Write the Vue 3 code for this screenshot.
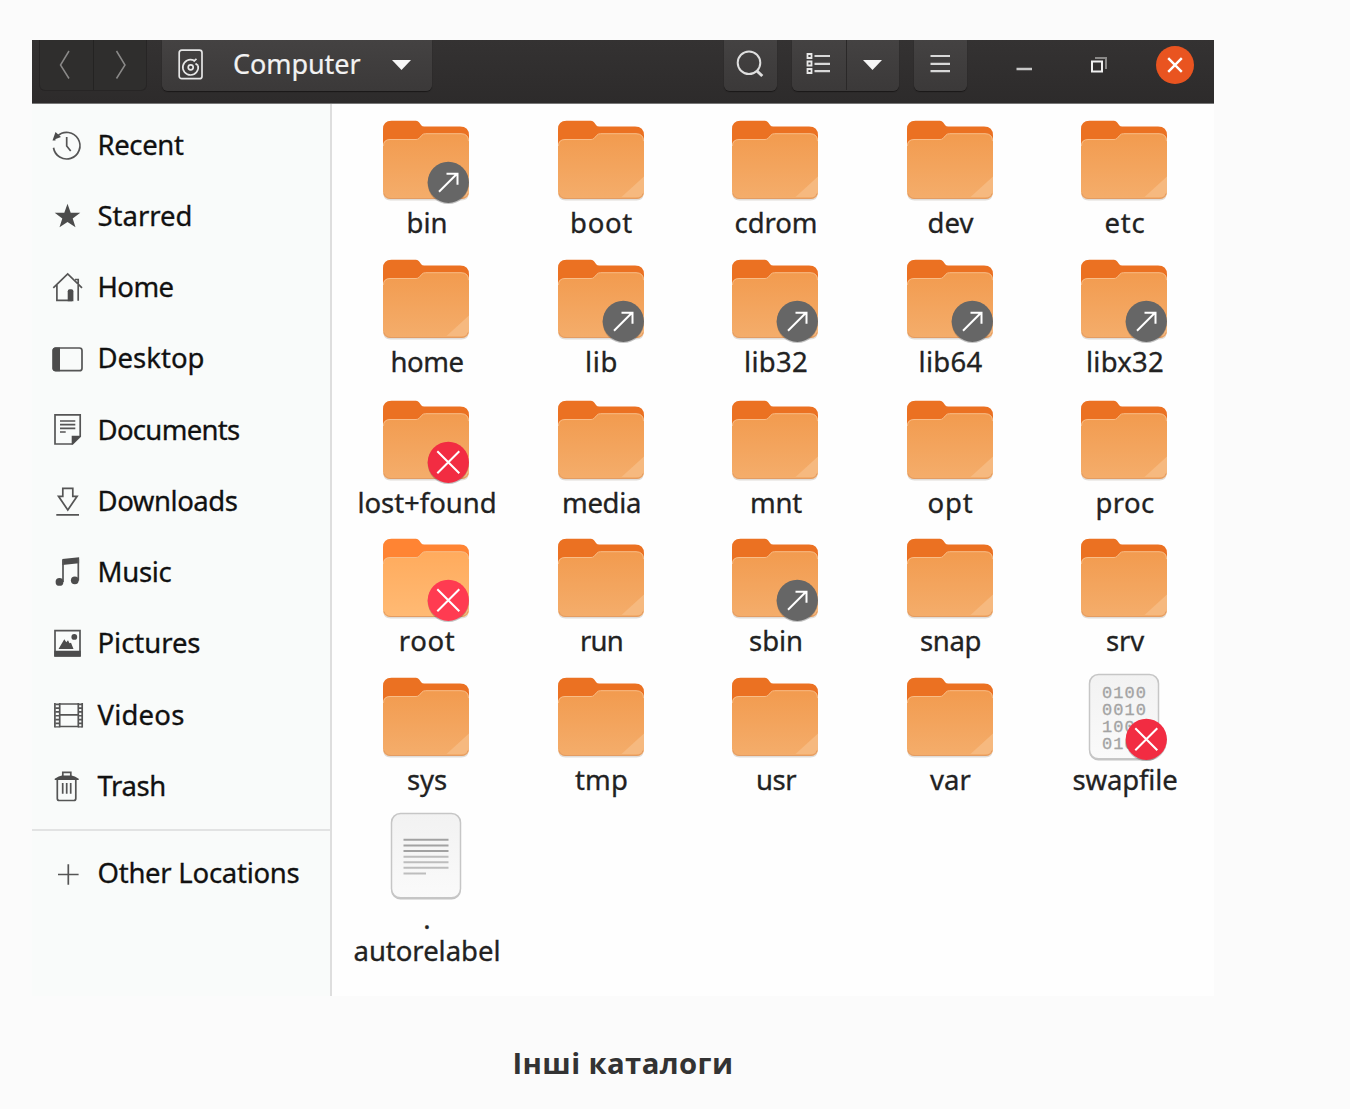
<script setup>
const places = [
  { name: 'Recent', width: 86 },
  { name: 'Starred', width: 95 },
  { name: 'Home', width: 76 },
  { name: 'Desktop', width: 107 },
  { name: 'Documents', width: 142 },
  { name: 'Downloads', width: 140 },
  { name: 'Music', width: 74 },
  { name: 'Pictures', width: 103 },
  { name: 'Videos', width: 87 },
  { name: 'Trash', width: 68.5 },
]

const entries = [
  { name: 'bin', width: 41, emblem: 'link' },
  { name: 'boot', width: 63 },
  { name: 'cdrom', width: 83 },
  { name: 'dev', width: 46 },
  { name: 'etc', width: 41 },
  { name: 'home', width: 73 },
  { name: 'lib', width: 33, emblem: 'link' },
  { name: 'lib32', width: 64, emblem: 'link' },
  { name: 'lib64', width: 64, emblem: 'link' },
  { name: 'libx32', width: 78, emblem: 'link' },
  { name: 'lost+found', width: 139, emblem: 'denied' },
  { name: 'media', width: 79 },
  { name: 'mnt', width: 52 },
  { name: 'opt', width: 46 },
  { name: 'proc', width: 59 },
  { name: 'root', width: 56.5, emblem: 'denied', active: true },
  { name: 'run', width: 43 },
  { name: 'sbin', width: 54, emblem: 'link' },
  { name: 'snap', width: 61 },
  { name: 'srv', width: 38 },
  { name: 'sys', width: 40 },
  { name: 'tmp', width: 53 },
  { name: 'usr', width: 40 },
  { name: 'var', width: 41 },
  { name: 'swapfile', width: 105, kind: 'binary', emblem: 'denied' },
  { name: 'autorelabel', prefix: '.', width: 147, kind: 'text' },
]

const bits = ['0100', '0010', '1000', '0100']

// Tracks a label out or in so that it takes the given width.
const vFit = {
  mounted(el, { value }) {
    const count = el.textContent.length
    const spacing = (value - el.getBoundingClientRect().width) / count
    el.style.letterSpacing = `${spacing.toFixed(3)}px`
  },
}
</script>

<template>
  <main class="page">
    <section class="window">
      <header class="titlebar">
        <div class="nav">
          <button class="nav-btn" aria-label="Back">
            <svg width="54" height="51" viewBox="0 0 54 51"><path d="M30 11 21.500 25 30 38.500" /></svg>
          </button>
          <button class="nav-btn" aria-label="Forward">
            <svg width="54" height="51" viewBox="0 0 54 51"><path d="M23.500 11 32 25 23.500 38.500" /></svg>
          </button>
        </div>

        <button class="btn path">
          <svg class="disk" width="26" height="32" viewBox="0 0 26 32">
            <rect x="1.200" y="1.200" width="22.800" height="28.500" rx="2.500" />
            <path d="M15.700 11.300A7.700 7.700 0 1 0 20 16.500M15.500 12.500 18.500 9.800" />
            <path d="M20 16.500 17.500 14.500" />
            <circle cx="12.700" cy="18.300" r="2.500" />
          </svg>
          <span v-fit="127.5" class="path-name">Computer</span>
          <svg class="caret" width="20" height="12" viewBox="0 0 20 12"><path d="M0 1H19L9.500 11Z" /></svg>
        </button>

        <button class="btn search" aria-label="Search">
          <svg width="53" height="51" viewBox="0 0 53 51">
            <circle cx="25" cy="22.700" r="11.300" />
            <path d="m32.500 30.500 2.500 2.500" />
            <path class="handle" d="m33 31 5.300 5" />
          </svg>
        </button>

        <div class="btn view">
          <button class="half" aria-label="List view">
            <svg width="53" height="51" viewBox="0 0 53 51">
              <path class="boxes" d="M15.500 14h4v4h-4ZM15.500 21.500h4v4h-4ZM15.500 29h4v4h-4Z" />
              <path d="M22.500 16H38M22.500 23.800H38M22.500 31.200H38" />
            </svg>
          </button>
          <button class="half" aria-label="View options">
            <svg class="caret" width="20" height="12" viewBox="0 0 20 12"><path d="M0 1H19L9.500 11Z" /></svg>
          </button>
        </div>

        <button class="btn menu" aria-label="Menu">
          <svg width="53" height="51" viewBox="0 0 53 51"><path d="M16.500 16h19.500M16.500 23.800h19.500M16.500 31.200h19.500" /></svg>
        </button>

        <div class="controls">
          <svg class="minimize" width="16" height="18" viewBox="0 0 16 18"><path class="line" d="M.5 13h15.500" /></svg>
          <svg class="restore" width="18" height="18" viewBox="0 0 18 18">
            <path class="ghost" d="M5 2H16V13" />
            <rect class="front" x="2" y="5.500" width="10" height="10" />
          </svg>
          <button class="close" aria-label="Close">
            <svg width="18" height="18" viewBox="0 0 18 18"><path d="m2.200 2.200 13.600 13.600M15.800 2.200 2.200 15.800" /></svg>
          </button>
        </div>
      </header>

      <div class="body">
        <nav class="sidebar">
          <ul class="places">
            <li v-for="place in places" :key="place.name" class="place">
              <svg class="glyph" viewBox="0 0 32 32">
                <template v-if="place.name === 'Recent'">
                  <path d="M6.500 8A13.300 13.300 0 1 1 2.400 18.800" stroke-dasharray="70 1.500" />
                  <path d="M15.700 9v9l4 5" />
                  <path class="solid" d="M4.500 4v8.500h-3Zm0 0 5.500 5-8 3Z" />
                </template>
                <path v-else-if="place.name === 'Starred'" class="solid" d="m16.500 4.800 3.200 9h9.600l-7.600 5.600 2.800 8.900-8-5.400-8 5.400 2.800-8.900-7.600-5.600h9.600Z" />
                <template v-else-if="place.name === 'Home'">
                  <path d="M2.300 16.800 16.700 3 31 16.800M5.900 14v15.400H21M27.200 14v15.700M24 8.500h3.200v4" />
                  <path class="solid" d="M16.700 20.300q0-2 2-2h1.700q2 0 2 2v9.900h-5.700Z" />
                </template>
                <template v-else-if="place.name === 'Desktop'">
                  <rect x="2.200" y="6" width="28.800" height="22.700" rx="2.500" />
                  <path class="solid" d="M4.500 5.500H9v23.700H4.500q-3 0-3-3V8.500q0-3 3-3Z" />
                </template>
                <template v-else-if="place.name === 'Documents'">
                  <path d="M4 1.800h25.200v21.500l-7.700 7.700H4Z" />
                  <path class="solid" d="M20.700 22.700h9L21.500 31.500h-.8Z" />
                  <path d="M9 8h15.300M9 11.700h15.300M9 15.400h15.300M9 19h5.700" />
                </template>
                <path v-else-if="place.name === 'Downloads'" d="M11.800 4.300h10v8h4.300L16.800 26 7.500 12.300h4.300ZM5.300 30.800H28" />
                <template v-else-if="place.name === 'Music'">
                  <path class="solid" d="m11.300 3 16.800-1.800v6L11.300 9Z" />
                  <path d="M12 4v22M27.300 3v21.500" />
                  <circle class="solid" cx="8.500" cy="25.900" r="3.900" />
                  <circle class="solid" cx="23.800" cy="24.300" r="3.900" />
                </template>
                <template v-else-if="place.name === 'Pictures'">
                  <path d="M4 3.600h25v25H4Z" />
                  <path class="solid" d="M3.300 23.700h26.400v6H3.300ZM7.500 22 13.300 12.200l2 3 1.700-2 1.500 3 1.500-.5L22.500 22Z" />
                  <circle class="solid" cx="23.300" cy="9.900" r="2.900" />
                </template>
                <template v-else-if="place.name === 'Videos'">
                  <path d="M3.900 4.900v24.700M8.700 4.900v24.700M27.300 4.900v24.700M31.200 4.900v24.700M8 6h20M8 16.900h20M8 28.500h20" />
                  <path d="M6.300 5.500v24M29.300 5.500v24" stroke-width="4" stroke-dasharray="1.700 2.100" />
                </template>
                <template v-else>
                  <path d="M11.800 6V2.400h8V6" />
                  <path class="solid" d="M3.700 9.900V8.700Q8 6 11 5.500h9.500q3 .5 7.200 3.200v1.200Z" />
                  <path d="M6.300 9.500v19q0 2 2 2h14.500q2 0 2-2v-19M11.700 13v10.700M15.700 13v10.700M19.700 13v10.700" />
                </template>
              </svg>
              <span v-fit="place.width">{{ place.name }}</span>
            </li>
          </ul>
          <div class="place other">
            <svg class="glyph" viewBox="0 0 32 32"><path d="M7 17.500h20.600M17.300 7.200v20.600" /></svg>
            <span v-fit="202">Other Locations</span>
          </div>
        </nav>

        <div class="grid">
          <svg class="defs" width="0" height="0" aria-hidden="true">
            <defs>
              <linearGradient id="front" x1="0" y1="0" x2="0" y2="1">
                <stop offset="0" stop-color="#f29b4f" /><stop offset="1" stop-color="#f4ad6b" />
              </linearGradient>
              <linearGradient id="frontActive" x1="0" y1="0" x2="0" y2="1">
                <stop offset="0" stop-color="#ffab5d" /><stop offset="1" stop-color="#ffba74" />
              </linearGradient>
              <linearGradient id="paper" x1="0" y1="0" x2="0" y2="1">
                <stop offset="0" stop-color="#f2f2f2" /><stop offset="1" stop-color="#fafafa" />
              </linearGradient>
            </defs>
          </svg>

          <figure v-for="entry in entries" :key="entry.name" class="entry">
            <svg class="icon" viewBox="0 0 94 94">
              <g v-if="!entry.kind">
                <path class="shade" d="M4.500 78h85v2.500q0 7-7 7h-71q-7 0-7-7Z" />
                <path :class="['back', { active: entry.active }]" d="M4 16.300q0-8.500 8.500-8.500H37q2 0 3.200 1.800l2 2.700q1 1.300 3 1.300H81q9 0 9 9V50H4Z" />
                <path :fill="entry.active ? 'url(#frontActive)' : 'url(#front)'" d="M4 33q0-6.500 6.500-6.500H37q2 0 3.200-1.200l2.600-3q1.300-1.600 3.700-1.600H82q8 0 8 8V78.500q0 7.500-7.500 7.500h-71Q4 86 4 78.500Z" />
                <path class="shine" d="M4.500 33q0-6.500 6.500-6.500H37q2 0 3.200-1.200l2.600-3q1.300-1.600 3.700-1.600H82q7.500 0 7.500 7.500" />
                <path class="corner" d="M67.500 84 90 63.500V78q0 6-6 6Z" />
                <path class="rim" d="M5 80.500q1.500 5 7 5h70q5.500 0 7-5" />
              </g>
              <g v-else>
                <rect class="paper-shade" x="12" y="5" width="70" height="85.500" rx="9.500" />
                <rect class="paper" x="12.500" y="4.500" width="69" height="84.300" rx="9" />
                <g v-if="entry.kind === 'binary'" class="bits">
                  <text v-for="(row, i) in bits" :key="i" x="25" :y="28 + i * 17" textLength="44">{{ row }}</text>
                </g>
                <g v-else class="lines">
                  <path class="dark" d="M24.500 30.700h45M24.500 36.400h45M24.500 41.900h45" />
                  <path d="M24.500 47.700h45M24.500 53.200h45M24.500 58.800h45M24.500 64.400h22.500" />
                </g>
              </g>
              <g v-if="entry.emblem" :class="['emblem', entry.emblem, { active: entry.active }]">
                <circle class="emblem-shade" cx="69.300" cy="70.300" r="20.700" />
                <circle class="disc" cx="69.300" cy="69.300" r="20.600" />
                <path v-if="entry.emblem === 'link'" d="m60 78.700 18-18M67.500 60.700h11v11" />
                <path v-else d="m58.300 58.300 22 22M80.300 58.300l-22 22" />
              </g>
            </svg>
            <figcaption class="label">
              <span v-fit="entry.width"><template v-if="entry.prefix">{{ entry.prefix }}<br></template>{{ entry.name }}</span>
            </figcaption>
          </figure>
        </div>
      </div>
    </section>

    <p class="caption"><span v-fit="221">Інші каталоги</span></p>
  </main>
</template>

<style>
body {
  margin: 0;
  background: #fbfbfb;
}
</style>

<style scoped>
.page {
  box-sizing: border-box;
  height: 1109px;
  padding: 40px 0 0 32px;
  overflow: hidden;
  background: #fbfbfb;
  font-family: "Noto Sans", "Open Sans", sans-serif;
}
button {
  margin: 0;
  padding: 0;
  border: 0;
  background: none;
  font: inherit;
  color: inherit;
}
svg {
  display: block;
  flex: none;
}
.window {
  width: 1182px;
  height: 956px;
  background: #fefefe;
}
.titlebar {
  box-sizing: border-box;
  display: flex;
  align-items: flex-start;
  height: 64px;
  padding-left: 7px;
  background: linear-gradient(#343232, #2d2b2b);
  border-bottom: 1px solid #777;
  color: #f2f2f2;
}
.nav {
  box-sizing: border-box;
  display: flex;
  width: 108px;
  height: 51px;
  border: 1px solid #272525;
  border-top: 0;
  border-radius: 0 0 6px 6px;
  background: #2f2e2d;
}
.nav-btn {
  width: 53px;
  overflow: hidden;
}
.nav-btn + .nav-btn {
  border-left: 1px solid #242322;
}
.nav-btn svg {
  margin-left: -1px;
  fill: none;
  stroke: #8a8988;
  stroke-width: 1.500;
}
.btn {
  box-sizing: border-box;
  height: 50.500px;
  border-radius: 0 0 6px 6px;
  background: linear-gradient(#444242, #3b3939);
  box-shadow: 0 1px 1px 0 #1a1818;
  clip-path: inset(0 -3px -4px -3px);
}
.path {
  display: flex;
  align-items: flex-start;
  width: 270px;
  margin-left: 15px;
  padding-left: 16px;
}
.disk {
  margin-top: 9px;
  fill: none;
  stroke: #e6e6e6;
  stroke-width: 1.700;
}
.path-name {
  margin: 6px 0 0 29px;
  font-size: 27px;
  line-height: 36px;
  white-space: nowrap;
  -webkit-text-stroke: 0.200px currentColor;
}
.caret {
  fill: #f7f7f7;
}
.path .caret {
  margin: 19px 0 0 31px;
}
.search {
  width: 53px;
  margin-left: 292px;
}
.search svg {
  fill: none;
  stroke: #dedede;
  stroke-width: 2;
}
.search .handle {
  stroke-width: 3;
}
.view {
  display: flex;
  width: 107px;
  margin-left: 15px;
}
.half {
  box-sizing: border-box;
  width: 54px;
  height: 50px;
}
.half + .half {
  width: 53px;
  border-left: 1px solid #2a2828;
}
.half .caret {
  margin: 0 0 0 16px;
}
.half svg:not(.caret),
.menu svg {
  fill: none;
  stroke: #d8d8d8;
  stroke-width: 2.200;
}
.half .boxes {
  stroke: #e8e8e8;
  stroke-width: 1.800;
}
.menu {
  width: 53px;
  margin-left: 15px;
}
.controls {
  display: flex;
  align-items: center;
  height: 49px;
  margin-left: 49px;
  fill: none;
}
.controls .line {
  stroke: #c8c8c8;
  stroke-width: 2.500;
}
.minimize {
  margin-top: 1px;
}
.restore {
  margin-left: 58px;
}
.ghost {
  stroke: #8a8988;
  stroke-width: 2;
}
.front {
  stroke: #efefef;
  stroke-width: 2;
}
.close {
  display: flex;
  align-items: center;
  justify-content: center;
  width: 38px;
  height: 38px;
  margin-left: 48px;
  border-radius: 50%;
  background: #e95420;
}
.close svg {
  fill: none;
  stroke: #fff;
  stroke-width: 2.400;
}
.body {
  display: flex;
  height: 892px;
}
.sidebar {
  box-sizing: border-box;
  width: 300px;
  padding-top: 4.500px;
  border-right: 2px solid #dedede;
  background: #f9fbfa;
  color: #111;
}
.places {
  margin: 0;
  padding: 0 0 8px;
  list-style: none;
  border-bottom: 2px solid #e2e3e3;
}
.place {
  display: flex;
  align-items: center;
  height: 71.270px;
  padding-left: 19px;
  font-size: 27.500px;
  line-height: 32px;
  white-space: nowrap;
  -webkit-text-stroke: 0.300px currentColor;
}
.place span {
  margin-top: 1px;
}
.other {
  margin-top: 6px;
}
.glyph {
  width: 32px;
  height: 32px;
  margin-right: 14.500px;
  overflow: visible;
  fill: none;
  stroke: #555;
  stroke-width: 1.700;
}
.solid {
  fill: #4c4c4c;
  stroke: none;
}
.grid {
  display: grid;
  grid-template-columns: repeat(5, 174.500px);
  grid-template-rows: 139px 140.500px 138.500px 139px 138.500px 160px;
  padding: 9px 0 0 7px;
  align-content: start;
}
.defs {
  position: absolute;
}
.entry {
  display: flex;
  flex-direction: column;
  align-items: center;
  margin: 0;
}
.icon {
  width: 94px;
  height: 94px;
  overflow: visible;
}
.back {
  fill: #eb7122;
}
.back.active {
  fill: #ff8433;
}
.shade {
  fill: rgba(90, 70, 50, 0.18);
}
.shine {
  fill: none;
  stroke: #f8bd87;
  stroke-width: 1;
}
.corner {
  fill: #f6b97f;
}
.rim {
  fill: none;
  stroke: #e39c63;
  stroke-width: 1;
}
.paper-shade {
  fill: #c4c4c4;
}
.paper {
  fill: url(#paper);
  stroke: #c6c6c6;
  stroke-width: 1.500;
}
.lines {
  stroke: #bdbdbd;
  stroke-width: 2;
}
.lines .dark {
  stroke: #a2a2a2;
}
.bits {
  fill: #a3a3a3;
  stroke: #a3a3a3;
  stroke-width: 0.300;
  font: 17px "Liberation Mono", monospace;
}
.emblem path {
  fill: none;
  stroke: #fff;
  stroke-width: 2;
}
.emblem-shade {
  fill: rgba(60, 60, 60, 0.3);
}
.link .disc {
  fill: #666;
}
.denied .disc {
  fill: #f22c42;
}
.denied.active .disc {
  fill: #ff3b51;
}
.label {
  margin-left: 1.500px;
  color: #222;
  font-size: 27.500px;
  line-height: 32px;
  text-align: center;
  white-space: nowrap;
  -webkit-text-stroke: 0.300px currentColor;
}
.caption {
  width: 1182px;
  margin: 47px 0 0;
  color: #333;
  font: 700 29.300px/40px "Open Sans", "Noto Sans", sans-serif;
  text-align: center;
}
</style>
